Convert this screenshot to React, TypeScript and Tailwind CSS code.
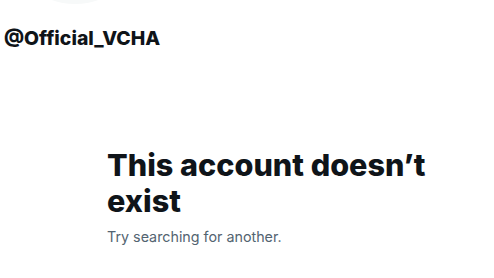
export default function App() {
  return (
    <div
      className="w-[494px] h-[278px] overflow-hidden bg-white text-[#0f1419]"
      style={{ fontFamily: "Inter, 'Noto Sans', sans-serif" }}
    >
      <div className="ml-[5px] -mt-[136px] h-[140px] w-[140px] rounded-full bg-[#f7f9f9]" />
      <div className="mt-[22px] pl-[4px] text-[19.4px] leading-[24px] font-extrabold">
        @Official_VCHA
      </div>
      <div className="mt-[97px] ml-[107px] w-[340px]">
        <h1 className="text-[30.6px] leading-[36px] font-extrabold">This account doesn’t exist</h1>
        <p className="mt-[8px] text-[14.3px] leading-[20px] text-[#536471]">
          Try searching for another.
        </p>
      </div>
    </div>
  );
}
